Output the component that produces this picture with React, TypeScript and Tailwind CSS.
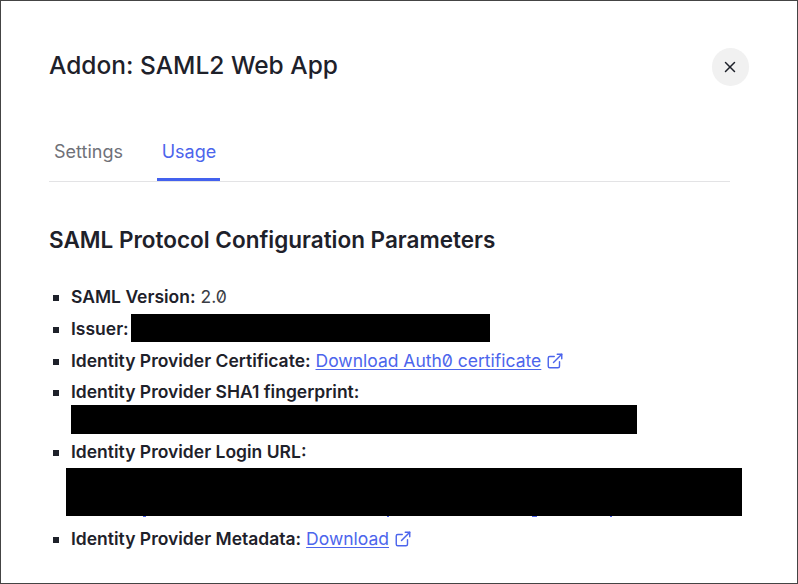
import { X, ExternalLink } from 'lucide-react'

function DocLink({ children }: { children: React.ReactNode }) {
  return (
    <a href="#" className="inline-flex items-center gap-[5px] text-[#4c65ec]">
      <span className="underline underline-offset-2 decoration-1 slashed-zero">{children}</span>
      <ExternalLink size={18} strokeWidth={1.9} />
    </a>
  )
}

export default function App() {
  return (
    <div className="w-[798px] h-[584px] overflow-hidden border border-[#444444] bg-white font-['Inter',sans-serif] text-[#1e212a]">
      <div className="flex items-start justify-between px-[48px] pt-[47px]">
        <h1 className="text-[24.5px] leading-[34px] font-medium">Addon: SAML2 Web App</h1>
        <button className="w-[37px] h-[38px] rounded-full bg-[#f1f1f1] flex items-center justify-center pr-[1px]">
          <X size={18} strokeWidth={2} className="text-[#1e212a]" />
        </button>
      </div>

      <div className="ml-[48px] w-[681px] mt-[47px] h-[49px] border-b border-[#e3e3e5] flex text-[18px]">
        <div className="w-[108px] pl-[5px] pt-[5px] leading-[28px] text-[#6f7178]">Settings</div>
        <div className="w-[63px] h-[48px] border-b-[3px] border-[#4361ee] text-center pt-[5px] pl-[1px] leading-[28px] text-[#4c65ec]">
          Usage
        </div>
      </div>

      <h2 className="ml-[48px] mt-[43px] text-[22.5px] leading-[30px] font-semibold">SAML Protocol Configuration Parameters</h2>

      <ul className="ml-[70px] mt-[28px] text-[17.5px] leading-[28px] list-[square] list-outside">
        <li className="h-[32px]">
          <strong className="font-semibold">SAML Version:</strong>{' '}
          <span className="slashed-zero text-[#3a3d45]">2.0</span>
        </li>
        <li className="h-[32px]">
          <div className="flex">
            <strong className="font-semibold">Issuer:</strong>
            <span className="ml-[2px] mt-[-1px] w-[359px] h-[28px] bg-black" />
          </div>
        </li>
        <li className="h-[31px]">
          <strong className="font-semibold">Identity Provider Certificate:</strong>{' '}
          <DocLink>Download Auth0 certificate</DocLink>
        </li>
        <li className="h-[60px]">
          <strong className="font-semibold block">Identity Provider SHA1 fingerprint:</strong>
          <div className="mt-[-1px] w-[566px] h-[29px] bg-black" />
        </li>
        <li className="h-[87px]">
          <strong className="font-semibold block">Identity Provider Login URL:</strong>
          <div className="ml-[-5px] mt-[2px] w-[676px] h-[48px] bg-black" />
          {/* bits of the link underline left showing under the black box */}
          <div className="ml-[72px] flex h-[1px]">
            <span className="w-[3px] bg-[#4c65ec]" />
            <span className="ml-[241px] w-[2px] bg-[#4c65ec]" />
            <span className="ml-[143px] w-[5px] bg-[#4c65ec]" />
            <span className="ml-[73px] w-[2px] bg-[#4c65ec]" />
          </div>
        </li>
        <li className="h-[32px]">
          <strong className="font-semibold">Identity Provider Metadata:</strong>{' '}
          <DocLink>Download</DocLink>
        </li>
      </ul>
    </div>
  )
}
